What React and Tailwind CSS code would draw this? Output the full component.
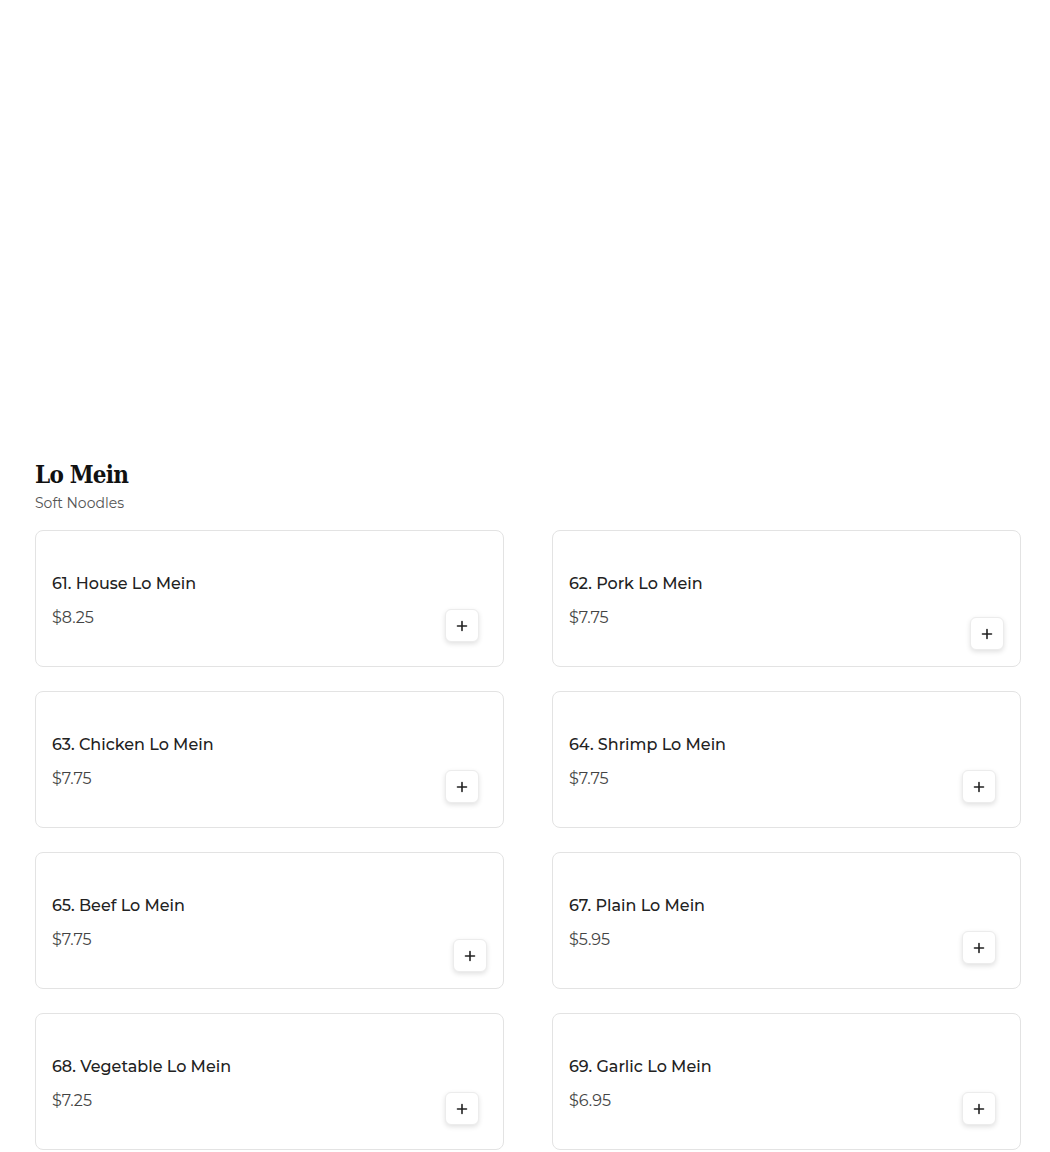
import React from "react";

const items = [
  { name: "61. House Lo Mein", price: "$8.25", alt: false },
  { name: "62. Pork Lo Mein", price: "$7.75", alt: true },
  { name: "63. Chicken Lo Mein", price: "$7.75", alt: false },
  { name: "64. Shrimp Lo Mein", price: "$7.75", alt: false },
  { name: "65. Beef Lo Mein", price: "$7.75", alt: true },
  { name: "67. Plain Lo Mein", price: "$5.95", alt: false },
  { name: "68. Vegetable Lo Mein", price: "$7.25", alt: false },
  { name: "69. Garlic Lo Mein", price: "$6.95", alt: false },
];

function Plus() {
  return (
    <svg width="12" height="12" viewBox="0 0 12 12" fill="none">
      <path d="M6 1.5v9M1.5 6h9" stroke="#222" strokeWidth="1.6" strokeLinecap="round" />
    </svg>
  );
}

function Card({ item }) {
  return (
    <div className="relative h-[137px] rounded-[8px] border border-[#e3e3e3] bg-white pl-4 pt-[41px]">
      <div className="text-[16px] leading-6 font-medium text-[#222]">{item.name}</div>
      <div className="mt-[10px] text-[16px] leading-6 text-[#444]">{item.price}</div>
      <button
        className={
          item.alt
            ? "absolute right-4 bottom-4 flex h-[33px] w-[34px] items-center justify-center rounded-[6px] border border-[#ececec] bg-white shadow-[0_2px_5px_rgba(0,0,0,0.12)]"
            : "absolute right-6 bottom-6 flex h-[33px] w-[34px] items-center justify-center rounded-[6px] border border-[#ececec] bg-white shadow-[0_2px_5px_rgba(0,0,0,0.12)]"
        }
      >
        <Plus />
      </button>
    </div>
  );
}

export default function App() {
  return (
    <div className="min-h-[1152px] bg-white pl-[35px] pr-[29px] pt-[458px] font-['Montserrat','Inter',sans-serif]">
      <h2 className="font-['DejaVu_Serif_Condensed','DejaVu_Serif',serif] text-[24px] font-black leading-[34px] tracking-[-0.8px] text-[#111]">
        Lo Mein
      </h2>
      <p className="mt-[1px] text-[14px] leading-5 text-[#555]">Soft Noodles</p>
      <div className="mt-[17px] grid grid-cols-2 gap-x-[48px] gap-y-[24px]">
        {items.map((it) => (
          <Card key={it.name} item={it} />
        ))}
      </div>
    </div>
  );
}
